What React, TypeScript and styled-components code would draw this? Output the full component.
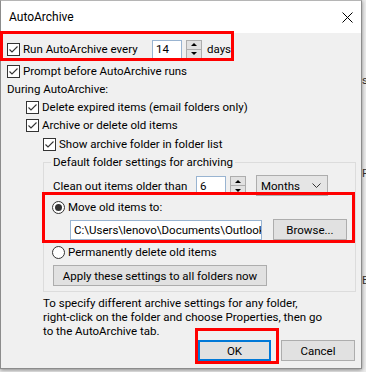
import React from "react";
import styled, { createGlobalStyle } from "styled-components";

const GlobalStyle = createGlobalStyle`
  html, body {
    margin: 0;
    padding: 0;
  }
  body {
    width: 366px;
    height: 372px;
    overflow: hidden;
    background: #e4e4e4;
    font-family: Roboto, "Noto Sans", sans-serif;
    font-size: 11.5px;
    color: #000;
  }
`;

const Desktop = styled.div`
  position: relative;
  width: 366px;
  height: 372px;
  overflow: hidden;
  background: #ececec;
`;

const Behind = styled.span<{ $top: number }>`
  position: absolute;
  left: 362px;
  top: ${(p) => p.$top}px;
  line-height: 16px;
  color: #333;
`;

const Window = styled.div`
  position: relative;
  width: 362px;
  height: 369px;
  box-sizing: border-box;
  border: 1px solid #8c8c8c;
  border-top-color: #b5b5b5;
  background: #f0f0f0;
  box-shadow: 0 1px 4px rgba(0, 0, 0, 0.45);
  display: flex;
  flex-direction: column;
`;

const TitleBar = styled.div`
  height: 32px;
  flex: none;
  background: #fff;
  display: flex;
  align-items: center;
  justify-content: space-between;
  padding: 0 8px 0 8px;
`;

const Title = styled.span`
  font-size: 12px;
`;

const Body = styled.div`
  display: flex;
  flex-direction: column;
`;

const Row = styled.div<{ $indent?: number; $top?: number; $h?: number }>`
  display: flex;
  align-items: center;
  gap: 3px;
  height: ${(p) => p.$h ?? 18}px;
  margin-top: ${(p) => p.$top ?? 0}px;
  padding-left: ${(p) => p.$indent ?? 0}px;
  white-space: nowrap;
`;

const Label = styled.span<{ $w?: number }>`
  ${(p) => (p.$w ? `width: ${p.$w}px;` : "")}
  flex: none;
`;

const Box = styled.span`
  width: 13px;
  height: 13px;
  box-sizing: border-box;
  border: 1px solid #333;
  background: #fff;
  flex: none;
  display: flex;
  align-items: center;
  justify-content: center;
`;

const Round = styled.span<{ $on?: boolean }>`
  width: 13px;
  height: 13px;
  box-sizing: border-box;
  border: 1px solid #333;
  border-radius: 50%;
  background: #fff;
  flex: none;
  display: flex;
  align-items: center;
  justify-content: center;
  &::after {
    content: "";
    display: ${(p) => (p.$on ? "block" : "none")};
    width: 7px;
    height: 7px;
    border-radius: 50%;
    background: #333;
  }
`;

const Field = styled.div<{ $w: number; $h?: number }>`
  width: ${(p) => p.$w}px;
  height: ${(p) => p.$h ?? 19}px;
  box-sizing: border-box;
  border: 1px solid #99b4d1;
  background: #fff;
  padding-left: 3px;
  display: flex;
  align-items: center;
  overflow: hidden;
  white-space: nowrap;
  flex: none;
`;

const Spinner = styled.div<{ $gap?: number }>`
  width: 16px;
  height: 19px;
  margin-left: ${(p) => p.$gap ?? 1}px;
  display: flex;
  flex-direction: column;
  flex: none;
`;

const SpinHalf = styled.div<{ $down?: boolean }>`
  flex: 1;
  box-sizing: border-box;
  border: 1px solid #adadad;
  ${(p) => (p.$down ? "border-top: none;" : "")}
  background: #e1e1e1;
  display: flex;
  align-items: center;
  justify-content: center;
  &::after {
    content: "";
    width: 0;
    height: 0;
    border-left: 3px solid transparent;
    border-right: 3px solid transparent;
    ${(p) =>
      p.$down ? "border-top: 3px solid #000;" : "border-bottom: 3px solid #000;"}
  }
`;

const Button = styled.div<{ $w: number; $default?: boolean; $h?: number }>`
  width: ${(p) => p.$w}px;
  height: ${(p) => p.$h ?? 21}px;
  box-sizing: border-box;
  border: ${(p) => (p.$default ? "2px solid #0078d7" : "1px solid #adadad")};
  background: #e1e1e1;
  display: flex;
  align-items: center;
  justify-content: center;
  flex: none;
`;

const Select = styled.div`
  width: 72px;
  height: 21px;
  box-sizing: border-box;
  border: 1px solid #adadad;
  background: #e5e5e5;
  margin-left: 10px;
  padding: 0 6px 0 4px;
  display: flex;
  align-items: center;
  justify-content: space-between;
  flex: none;
`;

const Group = styled.fieldset`
  margin: 0 0 0 42px;
  width: 313px;
  min-width: 0;
  box-sizing: border-box;
  border: 1px solid #dcdcdc;
  padding: 0 0 5px 9px;
  display: flex;
  flex-direction: column;
`;

const Legend = styled.legend`
  padding: 0 2px;
  margin-left: -2px;
  line-height: 18px;
`;

const Info = styled.p`
  margin: 4px 0 0 42px;
  line-height: 14px;
`;

const Footer = styled.div`
  display: flex;
  justify-content: flex-end;
  gap: 10px;
  margin-top: 2px;
  padding-right: 6px;
`;

const RedFrame = styled.div<{ $x: number; $y: number; $w: number; $h: number }>`
  position: absolute;
  left: ${(p) => p.$x}px;
  top: ${(p) => p.$y}px;
  width: ${(p) => p.$w}px;
  height: ${(p) => p.$h}px;
  box-sizing: border-box;
  border: 3px solid #f00;
  pointer-events: none;
`;

const Check = () => (
  <Box>
    <svg width="11" height="11" viewBox="0 0 11 11">
      <path d="M1.5 5.5 L4 8 L9.5 2.5" fill="none" stroke="#333" strokeWidth="1.1" />
    </svg>
  </Box>
);

const Close = () => (
  <svg width="11" height="11" viewBox="0 0 11 11">
    <path d="M0.5 0.5 L10.5 10.5 M10.5 0.5 L0.5 10.5" stroke="#000" strokeWidth="1" />
  </svg>
);

const Chevron = () => (
  <svg width="9" height="5" viewBox="0 0 9 5">
    <path d="M0.5 0.5 L4.5 4.5 L8.5 0.5" fill="none" stroke="#333" strokeWidth="1" />
  </svg>
);

const Spin = ({ gap }: { gap?: number }) => (
  <Spinner $gap={gap}>
    <SpinHalf />
    <SpinHalf $down />
  </Spinner>
);

export default function App() {
  return (
    <Desktop>
      <GlobalStyle />
      <Behind $top={72}>se</Behind>
      <Behind $top={165}>Fi</Behind>
      <Behind $top={272}>B</Behind>
      <Window>
        <TitleBar>
          <Title>AutoArchive</Title>
          <Close />
        </TitleBar>
        <Body>
          <Row $indent={6} $top={6} $h={20}>
            <Check />
            <Label $w={126}>Run AutoArchive every</Label>
            <Field $w={30}>14</Field>
            <Spin />
            <Label style={{ marginLeft: 2 }}>days</Label>
          </Row>
          <Row $indent={6} $top={3}>
            <Check />
            <Label>Prompt before AutoArchive runs</Label>
          </Row>
          <Row $indent={6}>
            <Label>During AutoArchive:</Label>
          </Row>
          <Row $indent={25}>
            <Check />
            <Label>Delete expired items (email folders only)</Label>
          </Row>
          <Row $indent={25}>
            <Check />
            <Label>Archive or delete old items</Label>
          </Row>
          <Row $indent={42} $top={1}>
            <Check />
            <Label>Show archive folder in folder list</Label>
          </Row>
          <Group>
            <Legend>Default folder settings for archiving</Legend>
            <Row $top={4} $h={21} style={{ gap: 0 }}>
              <Label $w={143}>Clean out items older than</Label>
              <Field $w={30}>6</Field>
              <Spin gap={4} />
              <Select>
                <span>Months</span>
                <Chevron />
              </Select>
            </Row>
            <Row $indent={0} $top={2} style={{ marginLeft: -1 }}>
              <Round $on />
              <Label>Move old items to:</Label>
            </Row>
            <Row $indent={17} $top={3} $h={21} style={{ gap: 11 }}>
              <Field $w={192} $h={20}>
                C:\Users\lenovo\Documents\Outlook
              </Field>
              <Button $w={74}>Browse...</Button>
            </Row>
            <Row $top={3} style={{ marginLeft: -1 }}>
              <Round />
              <Label>Permanently delete old items</Label>
            </Row>
            <Row $top={4} $h={21}>
              <Button $w={214}>Apply these settings to all folders now</Button>
            </Row>
          </Group>
          <Info>
            To specify different archive settings for any folder,
            <br />
            right-click on the folder and choose Properties, then go
            <br />
            to the AutoArchive tab.
          </Info>
          <Footer>
            <Button $w={73} $default>
              OK
            </Button>
            <Button $w={74}>Cancel</Button>
          </Footer>
        </Body>
      </Window>
      <RedFrame $x={0} $y={31} $w={234} $h={30} />
      <RedFrame $x={42} $y={192} $w={313} $h={51} />
      <RedFrame $x={195} $y={328} $w={84} $h={36} />
    </Desktop>
  );
}
